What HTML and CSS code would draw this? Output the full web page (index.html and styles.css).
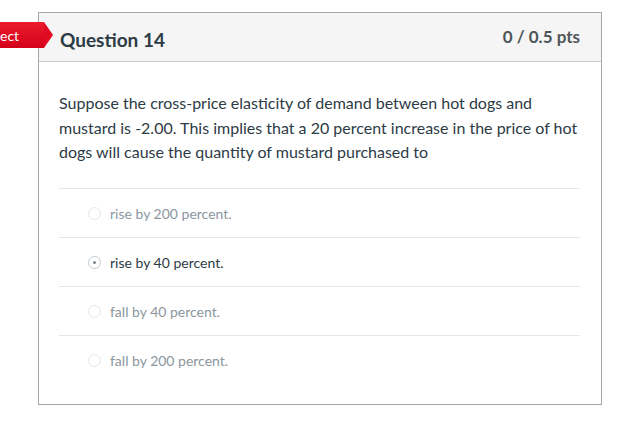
FILE: index.html
```html
<!DOCTYPE html>
<html>
<head>
<meta charset="utf-8">
<link rel="stylesheet" href="styles.css">
</head>
<body>
<div class="page">
  <div class="tag"><span class="tag-text">ect</span></div>
  <div class="card">
    <div class="card-header">
      <h2 class="title">Question 14</h2>
      <span class="pts">0 / 0.5 pts</span>
    </div>
    <div class="card-body">
      <p class="question">Suppose the cross-price elasticity of demand between hot dogs and mustard is -2.00. This implies that a 20 percent increase in the price of hot dogs will cause the quantity of mustard purchased to</p>
      <div class="answers">
        <div class="answer"><span class="radio"></span><span class="label">rise by 200 percent.</span></div>
        <div class="answer selected"><span class="radio"></span><span class="label">rise by 40 percent.</span></div>
        <div class="answer"><span class="radio"></span><span class="label">fall by 40 percent.</span></div>
        <div class="answer"><span class="radio"></span><span class="label">fall by 200 percent.</span></div>
      </div>
    </div>
  </div>
</div>
</body>
</html>
```
FILE: styles.css
```css
html, body {
  margin: 0;
  padding: 0;
  background: #fff;
  font-family: Lato, "Open Sans", sans-serif;
  color: #2d3b45;
}
.page {
  position: relative;
  padding: 12px 0 0 38px;
}
.tag {
  position: absolute;
  left: 0;
  top: 22px;
  width: 44px;
  height: 26px;
  background: linear-gradient(#ec1c2c, #d4001a);
  display: flex;
  align-items: center;
}
.tag::after {
  content: "";
  position: absolute;
  right: -9px;
  top: 0;
  border-left: 9px solid #e00a22;
  border-top: 13px solid transparent;
  border-bottom: 13px solid transparent;
}
.tag-text {
  color: #fff;
  font-size: 14px;
  margin-left: 0;
}
.card {
  width: 562px;
  height: 391px;
  border: 1px solid #a6a6a6;
  display: flex;
  flex-direction: column;
}
.card-header {
  height: 49px;
  background: #f5f5f5;
  border-bottom: 1px solid #c7cdd1;
  display: flex;
  align-items: center;
  justify-content: space-between;
  padding: 1px 21px 0;
  box-sizing: border-box;
}
.title {
  margin: 3px 0 0;
  font-size: 19px;
  font-weight: bold;
  color: #2d3b45;
}
.pts {
  font-size: 17px;
  font-weight: bold;
  color: #4f5559;
  margin-bottom: 3px;
}
.card-body {
  padding: 29px 21px 0 20px;
}
.question {
  margin: 0;
  font-size: 16px;
  line-height: 24.5px;
  color: #2d3b45;
}
.answers {
  margin-top: 23px;
}
.answer {
  height: 49px;
  display: flex;
  align-items: center;
  padding-left: 29px;
  padding-top: 2px;
  box-sizing: border-box;
  border-top: 1px solid #e4e7e9;
  font-size: 14px;
  color: #8b969e;
}
.answer.selected {
  color: #2d3b45;
}
.radio {
  width: 11px;
  height: 11px;
  border: 1px solid #e4e7e9;
  border-radius: 50%;
  margin-right: 9px;
  display: flex;
  align-items: center;
  justify-content: center;
  background: #fff;
}
.selected .radio {
  border-color: #c3c8cc;
}
.selected .radio::after {
  content: "";
  width: 3px;
  height: 3px;
  border-radius: 50%;
  background: #7d878e;
}
```
